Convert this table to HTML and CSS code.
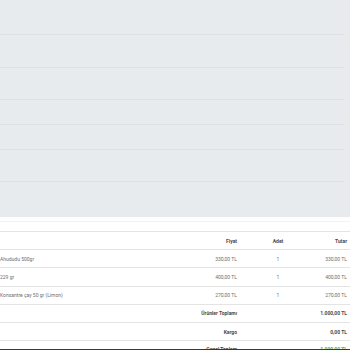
FILE: index.html
```html
<!DOCTYPE html>
<html lang="tr">
<head>
<meta charset="utf-8">
<link rel="stylesheet" href="styles.css">
</head>
<body>
<div class="skeleton">
  <div class="sk-row h34"></div>
  <div class="sk-row h32"></div>
  <div class="sk-row h31"></div>
  <div class="sk-row h24"></div>
  <div class="sk-row h24"></div>
  <div class="sk-row h31"></div>
  <div class="sk-rest"></div>
</div>
<div class="gap"></div>
<div class="table">
  <div class="row head">
    <div class="c-name"></div>
    <div class="c-price">Fiyat</div>
    <div class="c-qty">Adet</div>
    <div class="c-total">Tutar</div>
  </div>
  <div class="row">
    <div class="c-name">Ahududu 500gr</div>
    <div class="c-price">330,00 TL</div>
    <div class="c-qty">1</div>
    <div class="c-total">330,00 TL</div>
  </div>
  <div class="row">
    <div class="c-name">229 gr</div>
    <div class="c-price">400,00 TL</div>
    <div class="c-qty">1</div>
    <div class="c-total">400,00 TL</div>
  </div>
  <div class="row">
    <div class="c-name">Konsantre çay 50 gr (Limon)</div>
    <div class="c-price">270,00 TL</div>
    <div class="c-qty">1</div>
    <div class="c-total">270,00 TL</div>
  </div>
  <div class="row sum">
    <div class="s-label">Ürünler Toplamı</div>
    <div class="s-value">1.000,00 TL</div>
  </div>
  <div class="row sum">
    <div class="s-label">Kargo</div>
    <div class="s-value">0,00 TL</div>
  </div>
  <div class="row sum">
    <div class="s-label">Genel Toplam</div>
    <div class="s-value green">1.000,00 TL</div>
  </div>
</div>
<div class="bottom-bar"></div>
</body>
</html>
```
FILE: styles.css
```css
html, body {
  margin: 0;
  padding: 0;
  background: #ffffff;
  overflow: hidden;
  font-family: Roboto, "Open Sans", Arial, sans-serif;
}
.skeleton {
  height: 217px;
  background: #e8ebee;
  display: flex;
  flex-direction: column;
}
.sk-row {
  width: 344px;
  border-bottom: 1px solid #dde1e5;
  flex: none;
}
.h34 { height: 34px; }
.h32 { height: 32px; }
.h31 { height: 31px; }
.h24 { height: 24px; }
.sk-rest { flex: 1; }
.gap {
  height: 4px;
  border-bottom: 1px solid #f2f2f2;
  margin-bottom: 9px;
}
.table {
  width: 350px;
  font-size: 5px;
  color: #6f6f6f;
}
.row {
  display: grid;
  grid-template-columns: 190px 50px 76px 34px;
  align-items: center;
  height: 17.2px;
  border-top: 1px solid #e4e4e4;
}
.head {
  font-weight: 700;
  color: #4a4a4a;
}
.c-name {
  white-space: nowrap;
}
.c-price {
  text-align: right;
  padding-right: 3px;
}
.c-qty {
  text-align: center;
}
.c-total {
  text-align: right;
  padding-right: 3px;
  white-space: nowrap;
}
.sum {
  font-weight: 700;
  color: #4a4a4a;
}
.sum:last-child {
  align-items: start;
  padding-top: 5px;
}
.s-label {
  grid-column: 1 / 3;
  text-align: right;
  padding-right: 3px;
}
.s-value {
  grid-column: 3 / 5;
  text-align: right;
  padding-right: 3px;
}
.green {
  color: #4caf50;
}
.bottom-bar {
  position: fixed;
  left: 0;
  right: 0;
  bottom: 0;
  height: 1px;
  background: #3a3a3a;
}
```
